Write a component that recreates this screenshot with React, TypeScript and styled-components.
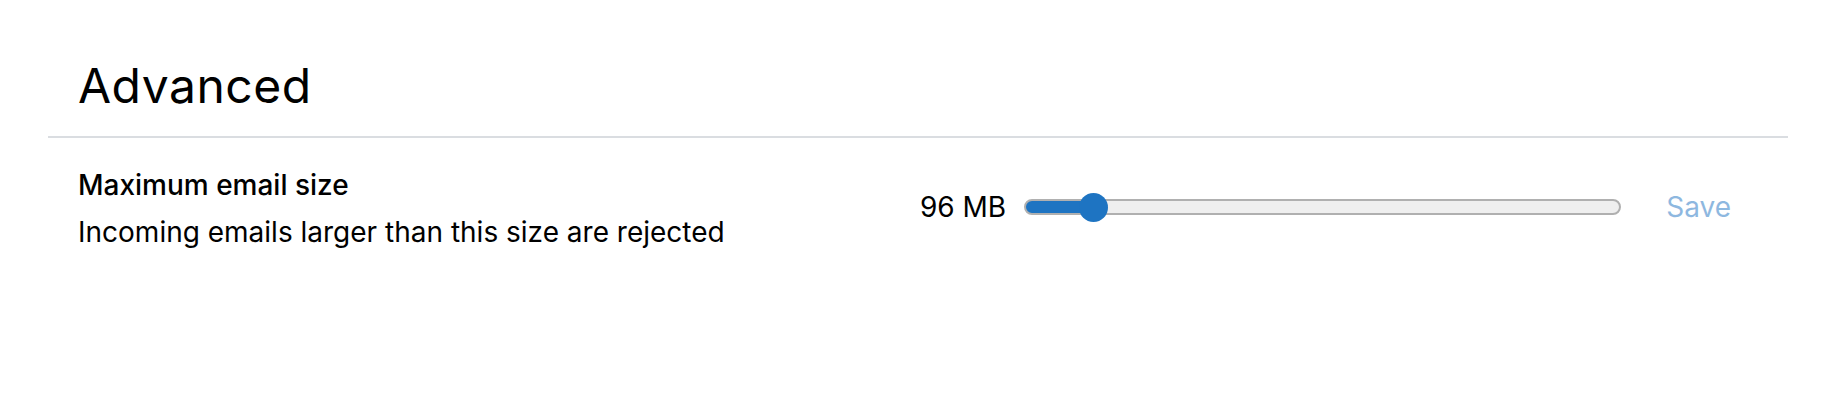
import React from "react";
import styled, { createGlobalStyle } from "styled-components";

const GlobalStyle = createGlobalStyle`
  html, body {
    margin: 0;
    padding: 0;
    background: #ffffff;
  }
  body {
    font-family: Inter, "Noto Sans", "Liberation Sans", sans-serif;
    color: #000000;
  }
`;

const Page = styled.div`
  padding: 0 48px;
  width: 1836px;
  box-sizing: border-box;
`;

const Section = styled.section`
  display: flex;
  flex-direction: column;
`;

const Header = styled.div`
  padding: 62px 30px 26px;
  border-bottom: 2px solid #dadde1;
`;

const Title = styled.h2`
  margin: 0;
  font-size: 48px;
  line-height: 48px;
  font-weight: 400;
  letter-spacing: 0.5px;
`;

const Row = styled.div`
  display: flex;
  align-items: center;
  padding: 30px 30px 0;
`;

const Info = styled.div`
  flex: 1;
  display: flex;
  flex-direction: column;
  gap: 13px;
`;

const Label = styled.div`
  font-size: 28px;
  line-height: 34px;
  font-weight: 500;
`;

const Description = styled.div`
  font-size: 28px;
  line-height: 34px;
  font-weight: 400;
`;

const Control = styled.div`
  display: flex;
  align-items: center;
  margin-bottom: 3px;
`;

const Value = styled.span`
  font-size: 28px;
  line-height: 34px;
  margin-right: 18px;
  white-space: nowrap;
`;

const Range = styled.input`
  -webkit-appearance: none;
  appearance: none;
  width: 597px;
  height: 29px;
  margin: 0;
  padding: 0;
  background: transparent;
  cursor: pointer;

  &::-webkit-slider-runnable-track {
    height: 16px;
    box-sizing: border-box;
    border-radius: 8px;
    border: 2px solid #b0b0b0;
    background: linear-gradient(
      to right,
      #1e74c2 0,
      #1e74c2 var(--fill),
      #efefef var(--fill),
      #efefef 100%
    );
  }

  &::-webkit-slider-thumb {
    -webkit-appearance: none;
    appearance: none;
    width: 29px;
    height: 29px;
    border-radius: 50%;
    background: #1e74c2;
    border: none;
    margin-top: -8.5px;
  }
`;

const SaveButton = styled.button`
  font-family: inherit;
  font-size: 28px;
  line-height: 34px;
  font-weight: 400;
  color: #1e74c2;
  opacity: 0.5;
  background: transparent;
  border: none;
  padding: 0 27px 0 45px;
  cursor: default;
`;

export default function App() {
  const min = 0;
  const max = 1024;
  const value = 96;
  const thumb = 29;
  const width = 597;
  const center = thumb / 2 + ((value - min) / (max - min)) * (width - thumb);
  const fill = `${center}px`;

  return (
    <>
      <GlobalStyle />
      <Page>
        <Section>
          <Header>
            <Title>Advanced</Title>
          </Header>
          <Row>
            <Info>
              <Label>Maximum email size</Label>
              <Description>Incoming emails larger than this size are rejected</Description>
            </Info>
            <Control>
              <Value>{value} MB</Value>
              <Range
                type="range"
                min={min}
                max={max}
                value={value}
                readOnly
                style={{ ["--fill" as string]: fill } as React.CSSProperties}
              />
              <SaveButton disabled>Save</SaveButton>
            </Control>
          </Row>
        </Section>
      </Page>
    </>
  );
}
